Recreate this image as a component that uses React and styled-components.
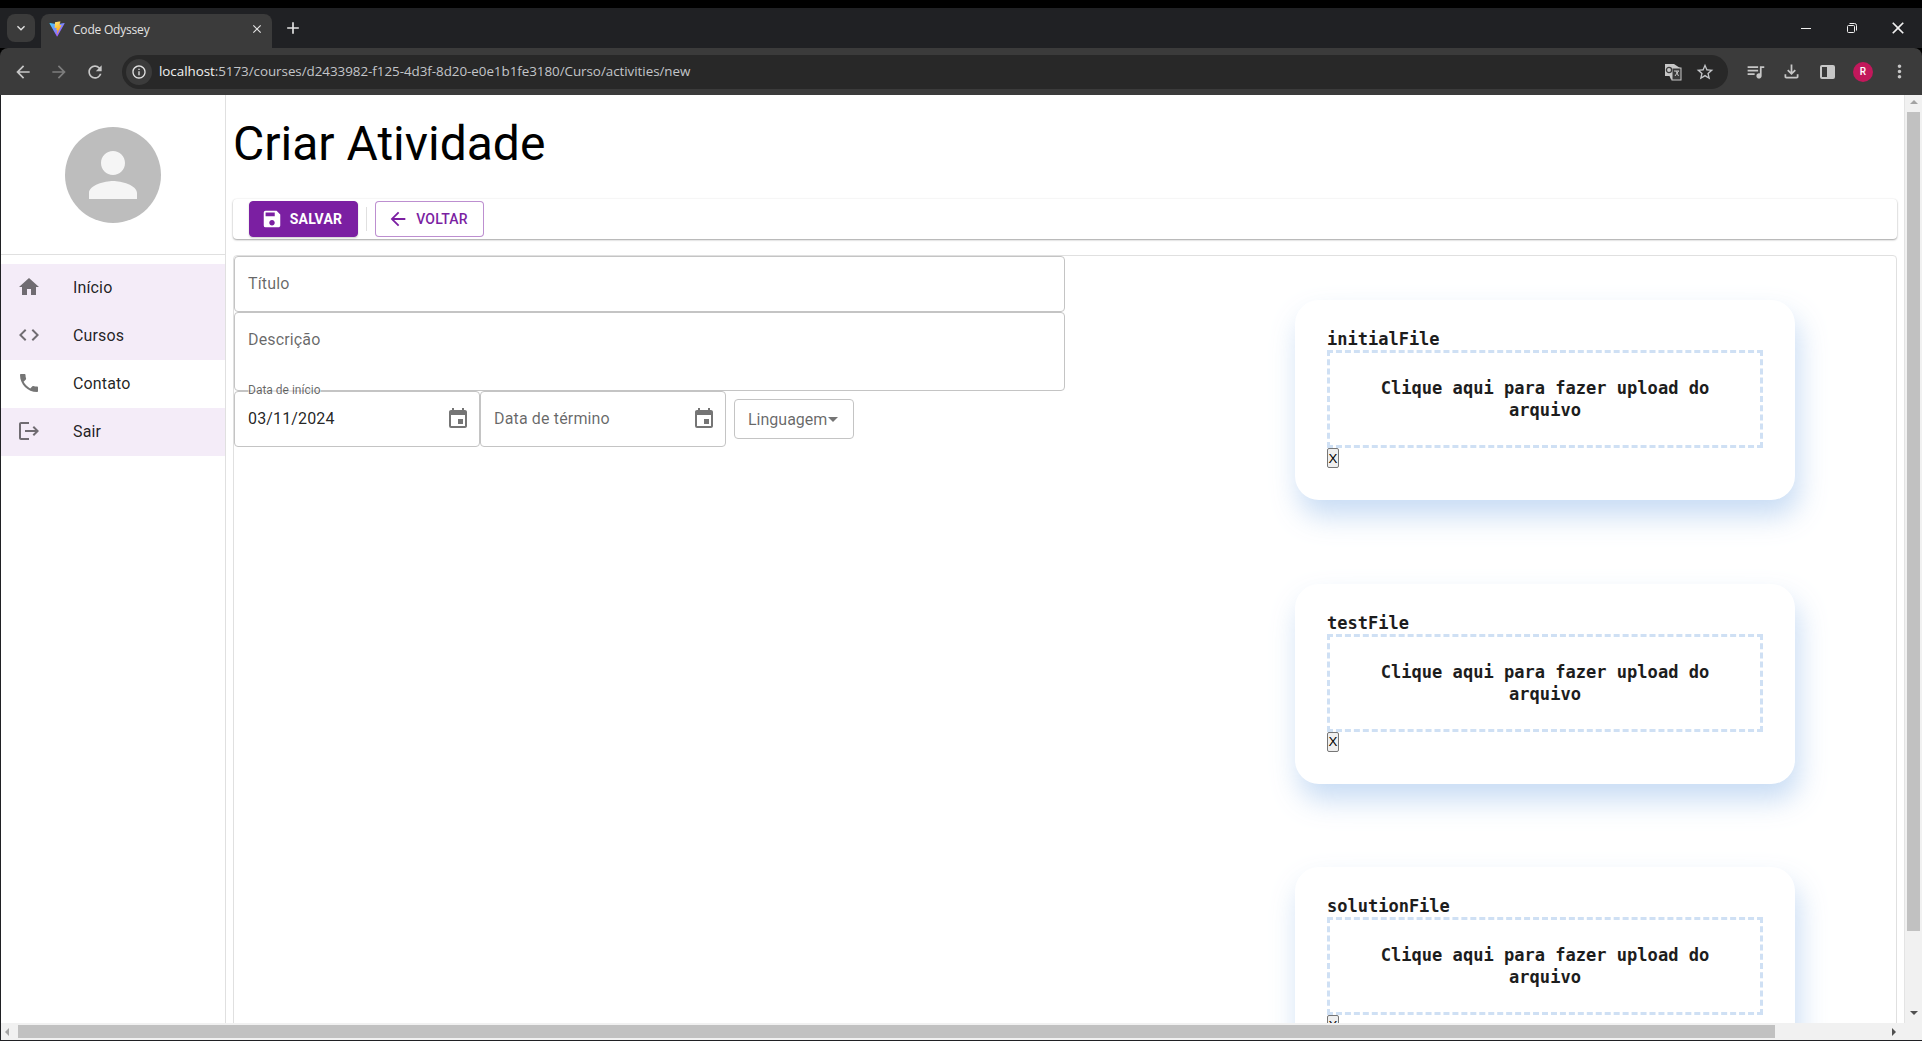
import React from 'react';
import styled, { createGlobalStyle } from 'styled-components';
import {
  MdAdd, MdArrowBack, MdArrowForward, MdClose, MdCode, MdEvent, MdHome, MdInfoOutline,
  MdKeyboardArrowDown, MdLogout, MdMoreVert, MdOutlineFileDownload, MdPerson, MdPhone,
  MdQueueMusic, MdRefresh, MdSave, MdStarBorder,
} from 'react-icons/md';

const purple = '#7b1fa2';

const GlobalStyle = createGlobalStyle`
  html, body { margin: 0; padding: 0; height: 100%; overflow: hidden; background: #fff; }
  body { font-family: Roboto, "Liberation Sans", sans-serif; }
  * { box-sizing: border-box; }
`;

const Window = styled.div`
  width: 1922px;
  height: 1041px;
  display: flex;
  flex-direction: column;
  background: #000;
  overflow: hidden;
`;

const TabStrip = styled.div`
  height: 40px;
  margin-top: 8px;
  background: #202124;
  display: flex;
  align-items: flex-end;
  flex-shrink: 0;
  color: #e3e3e3;
`;

const TabListButton = styled.div`
  width: 28px;
  height: 28px;
  margin: 0 6px 6px 7px;
  border-radius: 8px;
  background: #3b3b3b;
  display: flex;
  align-items: center;
  justify-content: center;
  font-size: 16px;
`;

const Tab = styled.div`
  width: 231px;
  height: 34px;
  background: #3b3b3b;
  border-radius: 8px 8px 0 0;
  display: flex;
  align-items: center;
  padding: 0 8px 4px 8px;
  font: 12px "Open Sans", sans-serif;
  gap: 8px;
`;

const TabTitle = styled.span`
  flex: 1;
  letter-spacing: -0.2px;
`;

const NewTab = styled.div`
  width: 28px;
  height: 28px;
  margin: 0 0 6px 7px;
  display: flex;
  align-items: center;
  justify-content: center;
  font-size: 20px;
`;

const WindowControls = styled.div`
  margin-left: auto;
  display: flex;
  height: 40px;
  align-items: center;
  padding-right: 1px;
`;

const WindowControl = styled.div`
  width: 46px;
  display: flex;
  justify-content: center;
  color: #f0f0f0;
  font-size: 20px;
`;

const BrowserBar = styled.div`
  height: 47px;
  background: #3b3b3b;
  border-radius: 8px 8px 0 0;
  display: flex;
  align-items: center;
  flex-shrink: 0;
  color: #c7c7c7;
  padding-left: 5px;
`;

const NavIcon = styled.div`
  width: 36px;
  display: flex;
  justify-content: center;
  font-size: 20px;
  color: ${(p) => (p.$dim ? '#7d7d7d' : '#c7c7c7')};
`;

const Omnibox = styled.div`
  width: 1606px;
  height: 34px;
  margin-left: 9px;
  border-radius: 17px;
  background: #282828;
  display: flex;
  align-items: center;
  padding: 0 7px 0 4px;
  font: 13.4px "Open Sans", sans-serif;
  color: #c3c5c8;
`;

const SiteInfo = styled.div`
  width: 26px;
  height: 26px;
  border-radius: 50%;
  background: #3b3b3b;
  color: #e3e3e3;
  display: flex;
  align-items: center;
  justify-content: center;
  font-size: 16px;
  margin-right: 7px;
`;

const Url = styled.span`
  flex: 1;
  white-space: nowrap;
  padding-bottom: 1px;
  letter-spacing: -0.04px;
`;

const Host = styled.span`
  color: #f1f1f1;
`;

const OmniIcon = styled.div`
  width: 32px;
  display: flex;
  justify-content: center;
  font-size: 20px;
`;

const ToolIcons = styled.div`
  display: flex;
  align-items: center;
  margin-left: 9px;
`;

const ToolIcon = styled.div`
  width: 36px;
  display: flex;
  justify-content: center;
  font-size: 21px;
`;

const ProfileBadge = styled.div`
  width: 20px;
  height: 20px;
  border-radius: 50%;
  background: #c2185b;
  color: #fff;
  font: 500 10px Roboto, sans-serif;
  display: flex;
  align-items: center;
  justify-content: center;
`;

const SidePanelGlyph = styled.div`
  width: 15px;
  height: 14px;
  border: 2px solid #c7c7c7;
  border-radius: 2px;
  background: linear-gradient(to right, transparent 50%, #c7c7c7 50%);
`;

const Viewport = styled.div`
  flex: 1;
  min-height: 0;
  display: grid;
  grid-template-columns: 1fr 18px;
  grid-template-rows: 1fr 17px;
  background: #fff;
  border-left: 1px solid #202124;
  border-bottom: 1px solid #202124;
`;

const Page = styled.div`
  display: flex;
  overflow: hidden;
  min-height: 0;
`;

const Sidebar = styled.aside`
  width: 225px;
  flex-shrink: 0;
  border-right: 1px solid #e0e0e0;
`;

const AvatarArea = styled.div`
  height: 160px;
  border-bottom: 1px solid #e0e0e0;
  display: flex;
  justify-content: center;
  padding-top: 32px;
  margin-bottom: 9px;
`;

const Avatar = styled.div`
  width: 96px;
  height: 96px;
  border-radius: 50%;
  background: #bdbdbd;
  color: #f5f5f5;
  font-size: 72px;
  display: flex;
  align-items: center;
  justify-content: center;
`;

const NavItem = styled.div`
  height: 48px;
  display: flex;
  align-items: center;
  padding: 0 0 2px 16px;
  background: ${(p) => (p.$active ? '#f4ecf8' : 'transparent')};
  color: rgba(0, 0, 0, 0.87);
  font-size: 16px;
  letter-spacing: 0.00938em;

  svg {
    width: 24px;
    height: 24px;
    margin-right: 32px;
    color: rgba(0, 0, 0, 0.54);
  }
`;

const Main = styled.main`
  flex: 1;
  min-width: 0;
  padding: 21px 7px 0;
`;

const Title = styled.h1`
  margin: 0 0 27px;
  font-size: 48px;
  line-height: 56px;
  font-weight: 400;
  color: #000;
`;

const ActionBar = styled.div`
  height: 40px;
  border-radius: 4px;
  padding-left: 16px;
  display: flex;
  align-items: center;
  box-shadow: 0 1px 2px rgba(0, 0, 0, 0.35), 0 0 2px rgba(0, 0, 0, 0.08);
  margin-bottom: 16px;
`;

const ActionButton = styled.button`
  height: 36px;
  width: 109px;
  border-radius: 4px;
  display: flex;
  align-items: center;
  justify-content: center;
  gap: 7px;
  padding: 0 4px 1px 0;
  font-family: Roboto, sans-serif;
  font-size: 14px;
  letter-spacing: 0.2px;
  background: ${(p) => (p.$filled ? purple : '#fff')};
  color: ${(p) => (p.$filled ? '#fff' : purple)};
  border: 1px solid ${(p) => (p.$filled ? purple : 'rgba(123, 31, 162, 0.5)')};
  box-shadow: ${(p) => (p.$filled ? '0 1px 2px rgba(0,0,0,.2)' : 'none')};
  font-weight: ${(p) => (p.$filled ? 700 : 500)};

  svg {
    width: 22px;
    height: 22px;
  }
`;

const ToolbarDivider = styled.div`
  width: 1px;
  height: 24px;
  background: #e0e0e0;
  margin: 0 8px;
`;

const FormPanel = styled.div`
  height: 900px;
  border: 1px solid #e0e0e0;
  border-radius: 4px;
  display: flex;
`;

const FormColumn = styled.div`
  width: 831px;
  flex-shrink: 0;
`;

const FieldBox = styled.div`
  position: relative;
  height: ${(p) => p.$height || 56}px;
  width: ${(p) => p.$width || 'auto'};
  border: 1px solid #c4c4c4;
  border-radius: 4px;
  padding: ${(p) => (p.$top ? '15px 13px' : '0 13px')};
  display: flex;
  align-items: ${(p) => (p.$top ? 'flex-start' : 'center')};
  justify-content: space-between;
  font-size: 16px;
  color: ${(p) => (p.$filled ? 'rgba(0,0,0,.87)' : 'rgba(0,0,0,.6)')};
  letter-spacing: 0.00938em;
  line-height: 24px;

  svg {
    width: 24px;
    height: 24px;
    margin-right: -4px;
    color: rgba(0, 0, 0, 0.54);
  }
`;

const FloatingLabel = styled.label`
  position: absolute;
  left: 13px;
  top: -9px;
  padding: 0;
  font-size: 12px;
  line-height: 14px;
  color: rgba(0, 0, 0, 0.6);
  letter-spacing: 0;
  background: rgba(255, 255, 255, 0.55);
`;

const DateRow = styled.div`
  display: flex;
  align-items: center;
`;

const LanguageSelect = styled.div`
  width: 120px;
  height: 40px;
  margin-left: 8px;
  border: 1px solid #c4c4c4;
  border-radius: 4px;
  display: flex;
  align-items: center;
  padding-left: 13px;
  font-size: 16px;
  color: rgba(0, 0, 0, 0.6);
`;

const Caret = styled.span`
  width: 0;
  height: 0;
  margin-left: 1px;
  border: 5px solid transparent;
  border-top-color: rgba(0, 0, 0, 0.54);
  border-bottom: 0;
`;

const FileColumn = styled.div`
  flex: 1;
  padding: 44px 0 0 230px;
  display: flex;
  flex-direction: column;
  gap: 83.5px;
`;

const FileCard = styled.section`
  width: 500px;
  height: 200px;
  flex-shrink: 0;
  padding: 29px 32px 0;
  border-radius: 24px;
  background: #fff;
  box-shadow: 4px 16px 28px rgba(190, 214, 242, 0.85);
  font-family: "DejaVu Sans Mono", monospace;
  color: #1d1d1d;
`;

const FileTitle = styled.div`
  font-size: 17px;
  font-weight: 700;
  line-height: 20px;
  margin-bottom: 1px;
`;

const DropZone = styled.div`
  height: 98px;
  border: 3px dashed #cfe0f4;
  padding: 24px 40px;
  text-align: center;
  font-size: 17.06px;
  font-weight: 700;
  line-height: 22px;
`;

const RemoveButton = styled.button`
  display: block;
  width: 12px;
  height: 20px;
  padding: 0;
  border: 1px solid #767676;
  border-radius: 2px;
  background: #efefef;
  color: #000;
  font: 13.33px "Liberation Sans", sans-serif;
`;

const VerticalScroll = styled.div`
  background: #f1f1f1;
  display: flex;
  flex-direction: column;
  align-items: center;
  border-left: 1px solid #e4e4e4;
`;

const VerticalThumb = styled.div`
  width: 13px;
  height: 819px;
  background: #c1c1c1;
`;

const HorizontalScroll = styled.div`
  background: #f1f1f1;
  grid-column: 1 / 3;
  display: flex;
  align-items: center;
  padding-left: 17px;
`;

const HorizontalThumb = styled.div`
  width: 1757px;
  height: 13px;
  background: #c1c1c1;
`;

const ScrollArrow = styled.span`
  width: 0;
  height: 0;
  border: 4px solid transparent;
  ${(p) => p.$dir === 'up' && 'border-bottom-color: #a3a3a3; border-top: 0; margin: 5px 0 8px;'}
  ${(p) => p.$dir === 'down' && 'border-top-color: #505050; border-bottom: 0; margin-top: 80px;'}
  ${(p) => p.$dir === 'right' && 'border-left-color: #505050; border-right: 0; margin-left: 117px;'}
`;

const LeftArrow = styled.span`
  position: absolute;
  left: 5px;
  width: 0;
  height: 0;
  border: 4px solid transparent;
  border-right-color: #a3a3a3;
  border-left: 0;
`;

const navItems = [
  { label: 'Início', icon: <MdHome />, active: true },
  { label: 'Cursos', icon: <MdCode />, active: true },
  { label: 'Contato', icon: <MdPhone /> },
  { label: 'Sair', icon: <MdLogout />, active: true },
];

const files = ['initialFile', 'testFile', 'solutionFile'];

function ViteIcon() {
  return (
    <svg width="16" height="16" viewBox="0 0 410 404">
      <defs>
        <linearGradient id="viteA" x1="0" y1="0" x2="1" y2="1">
          <stop offset="0" stopColor="#41d1ff" />
          <stop offset="1" stopColor="#bd34fe" />
        </linearGradient>
        <linearGradient id="viteB" x1="0" y1="0" x2="0.4" y2="1">
          <stop offset="0" stopColor="#ffea83" />
          <stop offset="1" stopColor="#ffa800" />
        </linearGradient>
      </defs>
      <path d="M399 63 217 388c-4 7-14 7-18 0L14 63c-4-7 2-16 11-14l182 33h7l177-33c8-2 13 7 8 14Z" fill="url(#viteA)" />
      <path d="M293 1 158 27c-2 0-4 2-4 5l-8 140c0 3 3 6 6 5l38-9c3-1 7 2 6 6l-11 55c-1 4 3 7 6 6l23-7c4-1 7 2 6 6l-18 85c-1 5 6 8 9 3l2-3 106-212c2-4-1-8-5-7l-40 8c-4 1-7-3-6-6l26-90c1-4-3-8-6-7Z" fill="url(#viteB)" />
    </svg>
  );
}

function TranslateIcon() {
  return (
    <svg width="18" height="18" viewBox="0 0 18 18">
      <path d="M1 1h9l6 4v11.5H7L5.5 13H1z" fill="#c7c7c7" />
      <rect x="8" y="5" width="9" height="12" fill="#3b3b3b" stroke="#c7c7c7" />
      <circle cx="5" cy="7" r="2.6" fill="none" stroke="#3b3b3b" strokeWidth="1.3" />
      <path d="M10 8h5M12 8l2.5 5M14.5 8 11 13" stroke="#c7c7c7" fill="none" />
    </svg>
  );
}

function MinimizeIcon() {
  return (
    <svg width="12" height="12" viewBox="0 0 12 12">
      <path d="M1 6.5h10" stroke="#f0f0f0" />
    </svg>
  );
}

function RestoreIcon() {
  return (
    <svg width="12" height="12" viewBox="0 0 12 12" fill="none" stroke="#f0f0f0">
      <rect x="1.5" y="3.5" width="7" height="7" rx="1" />
      <path d="M3.5 1.5h5a2 2 0 0 1 2 2v5" />
    </svg>
  );
}

function FileUploadCard({ name }) {
  return (
    <FileCard>
      <FileTitle>{name}</FileTitle>
      <DropZone>Clique aqui para fazer upload do arquivo</DropZone>
      <RemoveButton>X</RemoveButton>
    </FileCard>
  );
}

function BrowserChrome() {
  return (
    <>
      <TabStrip>
        <TabListButton><MdKeyboardArrowDown /></TabListButton>
        <Tab>
          <ViteIcon />
          <TabTitle>Code Odyssey</TabTitle>
          <MdClose size={14} />
        </Tab>
        <NewTab><MdAdd /></NewTab>
        <WindowControls>
          <WindowControl><MinimizeIcon /></WindowControl>
          <WindowControl><RestoreIcon /></WindowControl>
          <WindowControl><MdClose /></WindowControl>
        </WindowControls>
      </TabStrip>
      <BrowserBar>
        <NavIcon><MdArrowBack /></NavIcon>
        <NavIcon $dim><MdArrowForward /></NavIcon>
        <NavIcon><MdRefresh /></NavIcon>
        <Omnibox>
          <SiteInfo><MdInfoOutline /></SiteInfo>
          <Url>
            <Host>localhost</Host>:5173/courses/d2433982-f125-4d3f-8d20-e0e1b1fe3180/Curso/activities/new
          </Url>
          <OmniIcon><TranslateIcon /></OmniIcon>
          <OmniIcon><MdStarBorder /></OmniIcon>
        </Omnibox>
        <ToolIcons>
          <ToolIcon><MdQueueMusic /></ToolIcon>
          <ToolIcon><MdOutlineFileDownload /></ToolIcon>
          <ToolIcon><SidePanelGlyph /></ToolIcon>
          <ToolIcon><ProfileBadge>R</ProfileBadge></ToolIcon>
          <ToolIcon><MdMoreVert /></ToolIcon>
        </ToolIcons>
      </BrowserBar>
    </>
  );
}

export default function App() {
  return (
    <Window>
      <GlobalStyle />
      <BrowserChrome />
      <Viewport>
        <Page>
          <Sidebar>
            <AvatarArea>
              <Avatar><MdPerson /></Avatar>
            </AvatarArea>
            {navItems.map((item) => (
              <NavItem key={item.label} $active={item.active}>
                {item.icon}
                {item.label}
              </NavItem>
            ))}
          </Sidebar>
          <Main>
            <Title>Criar Atividade</Title>
            <ActionBar>
              <ActionButton $filled><MdSave />SALVAR</ActionButton>
              <ToolbarDivider />
              <ActionButton><MdArrowBack />VOLTAR</ActionButton>
            </ActionBar>
            <FormPanel>
              <FormColumn>
                <FieldBox>Título</FieldBox>
                <FieldBox $height={79} $top>Descrição</FieldBox>
                <DateRow>
                  <FieldBox $width="246px" $filled>
                    <FloatingLabel>Data de início</FloatingLabel>
                    03/11/2024
                    <MdEvent />
                  </FieldBox>
                  <FieldBox $width="246px">
                    Data de término
                    <MdEvent />
                  </FieldBox>
                  <LanguageSelect>Linguagem<Caret /></LanguageSelect>
                </DateRow>
              </FormColumn>
              <FileColumn>
                {files.map((name) => <FileUploadCard key={name} name={name} />)}
              </FileColumn>
            </FormPanel>
          </Main>
        </Page>
        <VerticalScroll>
          <ScrollArrow $dir="up" />
          <VerticalThumb />
          <ScrollArrow $dir="down" />
        </VerticalScroll>
        <HorizontalScroll>
          <LeftArrow />
          <HorizontalThumb />
          <ScrollArrow $dir="right" />
        </HorizontalScroll>
      </Viewport>
    </Window>
  );
}
